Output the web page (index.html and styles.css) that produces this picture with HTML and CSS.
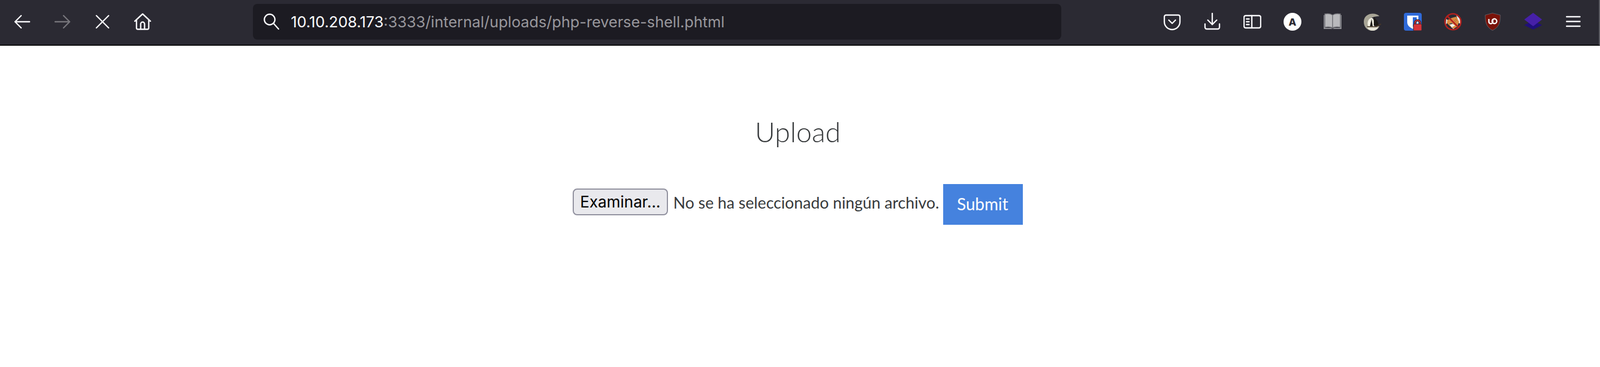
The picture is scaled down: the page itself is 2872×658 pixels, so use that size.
FILE: index.html
```html
<!DOCTYPE html>
<html lang="es">
<head>
  <meta charset="UTF-8" />
  <meta name="viewport" content="width=device-width, initial-scale=1.0"/>
  <title>Upload</title>
  <link rel="stylesheet" href="styles.css">
</head>
<body>
  <header class="toolbar">
    <div class="nav-group">
      <svg class="icon" viewBox="0 0 32 32"><path d="M29 16H3M14 5 3 16l11 11"/></svg>
      <svg class="icon icon-dim" viewBox="0 0 32 32"><path d="M3 16h26M18 5l11 11-11 11"/></svg>
      <svg class="icon" viewBox="0 0 32 32"><path d="M5 5l22 22M27 5 5 27"/></svg>
      <svg class="icon" viewBox="0 0 32 32"><path d="M2 15 16 2l14 13M5 13v14a2.500 2.500 0 0 0 2.500 2.500h17A2.500 2.500 0 0 0 27 27V13M12.500 29v-9a3.500 3.500 0 0 1 7 0v9"/></svg>
    </div>

    <div class="urlbar">
      <svg class="search-icon" viewBox="0 0 32 32"><circle cx="13" cy="12" r="9.500"/><path d="M20 19l9 10"/></svg>
      <span class="url"><span class="url-host">10.10.208.173</span>:3333/internal/uploads/php-reverse-shell.phtml</span>
    </div>

    <div class="action-group">
      <svg class="icon" viewBox="0 0 32 32"><path d="M5 4h22a3 3 0 0 1 3 3v9a14 14 0 0 1-28 0V7a3 3 0 0 1 3-3z"/><path d="M10 13l6 6 6-6"/></svg>
      <svg class="icon" viewBox="0 0 32 32"><path d="M16 1v20M8 13l8 8 8-8M3 20v6a3 3 0 0 0 3 3h20a3 3 0 0 0 3-3v-6"/></svg>
      <svg class="icon" viewBox="0 0 32 32"><rect x="1" y="5" width="30" height="22" rx="3"/><path d="M15 5v22M5.500 11H10M5.500 16H10M5.500 21H10"/></svg>
      <svg class="ext" viewBox="0 0 32 32">
        <circle cx="16" cy="16" r="16" fill="#fff"/>
        <text x="16" y="22.500" class="ext-a">A</text>
      </svg>
      <svg class="ext" viewBox="0 0 32 32">
        <path d="M0 4h3v23h10l3 2 3-2h10V4h3v25H0z" fill="#8f8f94"/>
        <path d="M2 2c5-1 10-1 14 2v23c-4-2-9-2-14-1zM30 2c-5-1-10-1-14 2v23c4-2 9-2 14-1z" fill="#b9b9bc" stroke="#6e6e74" stroke-width="1.500"/>
      </svg>
      <svg class="ext" viewBox="0 0 32 32">
        <path d="M28 6C21-2 0 0 0 16c0 10 7 16 15 16 6 0 11-3 13-8H14C8 19 8 11 13 9c5-2 10-3 15-3z" fill="#a8a596"/>
        <path d="M13 9c4-1 6 5 6 15H8C5 18 8 11 13 9z" fill="#f1efe2"/>
        <path d="M14 11l2 13h-5zM18 7l7 9 2 7h-9z" fill="#1d1a16"/>
        <path d="M6 25h16l9-5" fill="none" stroke="#4a3a28" stroke-width="1.600"/>
        <path d="M6 26h20c-2 4-6 6-10 6s-8-2-10-6z" fill="#e6e4d6"/>
      </svg>
      <svg class="ext" viewBox="0 0 32 32">
        <rect width="32" height="32" rx="4" fill="#2f6ad9"/>
        <path d="M6 5h20v12c0 6-5 9-10 12-5-3-10-6-10-12z" fill="#fff"/>
        <path d="M16 8h7v9c0 4-3 6-7 8z" fill="#2f6ad9"/>
        <path d="M20 21v-3a4.500 4.500 0 0 1 9 0v3" fill="none" stroke="#1d1c22" stroke-width="4"/>
        <path d="M20 21v-3a4.500 4.500 0 0 1 9 0v3" fill="none" stroke="#d9343a" stroke-width="2"/>
        <rect x="17" y="20" width="15" height="12" rx="1.500" fill="#d9343a" stroke="#2b2a33"/>
      </svg>
      <svg class="ext" viewBox="0 0 32 32">
        <path d="M3 22 4 11l4 3zM22 4l7 7 1 9-4-2zM12 25l8 1-3 3z" fill="#f2f0ea"/>
        <path d="M6 13l8-4 8-2 5 9-3 9-7 3-6-4-6-6z" fill="#d9893f"/>
        <path d="M10 21l6-1 4 3-6 3z" fill="#f2f0ea"/>
        <path d="M10 20l5-1" stroke="#34485c" stroke-width="1.500"/>
        <path d="M18 13l3 3M20 11l3 3" stroke="#a4602a"/>
        <circle cx="16" cy="16" r="14.300" fill="none" stroke="#b3211e" stroke-width="2.600"/>
        <path d="M6 6l20 20" stroke="#b3211e" stroke-width="2.600"/>
      </svg>
      <svg class="ext" viewBox="0 0 32 32">
        <path d="M15 .500 2 4c0 12 1 21 13 27.500C28 25 29 16 29 4z" fill="#7a1209" stroke="#5f5f66"/>
        <path d="M8.500 11v5a3.500 3.500 0 0 0 7 0v-5" fill="none" stroke="#fff" stroke-width="2.400"/>
        <circle cx="18.500" cy="15" r="4.200" fill="none" stroke="#fff" stroke-width="2.400"/>
      </svg>
      <svg class="ext" viewBox="0 0 32 32">
        <path d="M16 14 32 22 16 30 0 22z" fill="#1f0f7a"/>
        <path d="M16 0 32 12 16 24 0 12z" fill="#4620a8"/>
      </svg>
      <svg class="icon" viewBox="0 0 32 32"><path d="M4 7h24M4 15.500h24M4 24h24"/></svg>
    </div>
  </header>

  <main class="content">
    <h1 class="title">Upload</h1>
    <form class="upload-form">
      <span class="file-button">Examinar...</span>
      <span class="file-label">No se ha seleccionado ningún archivo.</span>
      <button class="submit" type="button">Submit</button>
    </form>
  </main>
</body>
</html>
```

FILE: styles.css
```css
* {
  box-sizing: border-box;
}

body {
  margin: 0;
  background: white;
  font-family: 'Lato', 'Noto Sans', sans-serif;
}

.toolbar {
  display: flex;
  align-items: center;
  height: 82px;
  padding: 0 30px 2px 24px;
  background-color: #2b2a33;
  border-bottom: 2px solid #0c0c0d;
  border-right: 2px solid #5b5b62;
}

.nav-group,
.action-group {
  display: flex;
  align-items: center;
  gap: 40px;
}

.action-group {
  margin-left: auto;
}

.icon {
  width: 32px;
  height: 32px;
  fill: none;
  stroke: #fbfbfe;
  stroke-width: 2.400;
  stroke-linecap: round;
  stroke-linejoin: round;
}

.icon-dim {
  stroke: #77767c;
}

.ext {
  width: 32px;
  height: 32px;
}

.ext-a {
  font-family: 'Inter', sans-serif;
  font-size: 18px;
  font-weight: 800;
  text-anchor: middle;
  fill: #2b2a33;
}

.urlbar {
  display: flex;
  align-items: center;
  width: 1451px;
  height: 64px;
  margin-left: 182px;
  padding-left: 17px;
  background-color: #1c1b22;
  border-radius: 8px;
}

.search-icon {
  width: 32px;
  height: 32px;
  margin-right: 19px;
  fill: none;
  stroke: #fbfbfe;
  stroke-width: 2.400;
  stroke-linecap: round;
}

.url {
  font-family: 'Inter', sans-serif;
  font-size: 27.200px;
  color: #98979c;
  white-space: nowrap;
}

.url-host {
  color: #fbfbfe;
}

.content {
  padding: 0 8px 0 0;
  text-align: center;
  color: #373a3c;
}

.title {
  margin: 0;
  padding-top: 119px;
  font-size: 50px;
  font-weight: 300;
  line-height: 70px;
}

.upload-form {
  display: flex;
  justify-content: center;
  align-items: center;
  margin-top: 59px;
}

.file-button {
  display: flex;
  align-items: center;
  height: 48px;
  padding: 0 11px;
  margin-top: -9px;
  background-color: #e9e9ed;
  border: 2px solid #8f8f9d;
  border-radius: 8px;
  font-family: 'Inter', sans-serif;
  font-size: 28px;
  color: black;
}

.file-label {
  margin: -8px 0 0 10px;
  font-size: 28.600px;
}

.submit {
  height: 73px;
  margin-left: 7px;
  padding: 0 26px 3px 25px;
  background-color: #4582de;
  border: none;
  font-family: inherit;
  font-size: 30px;
  color: white;
}
```
